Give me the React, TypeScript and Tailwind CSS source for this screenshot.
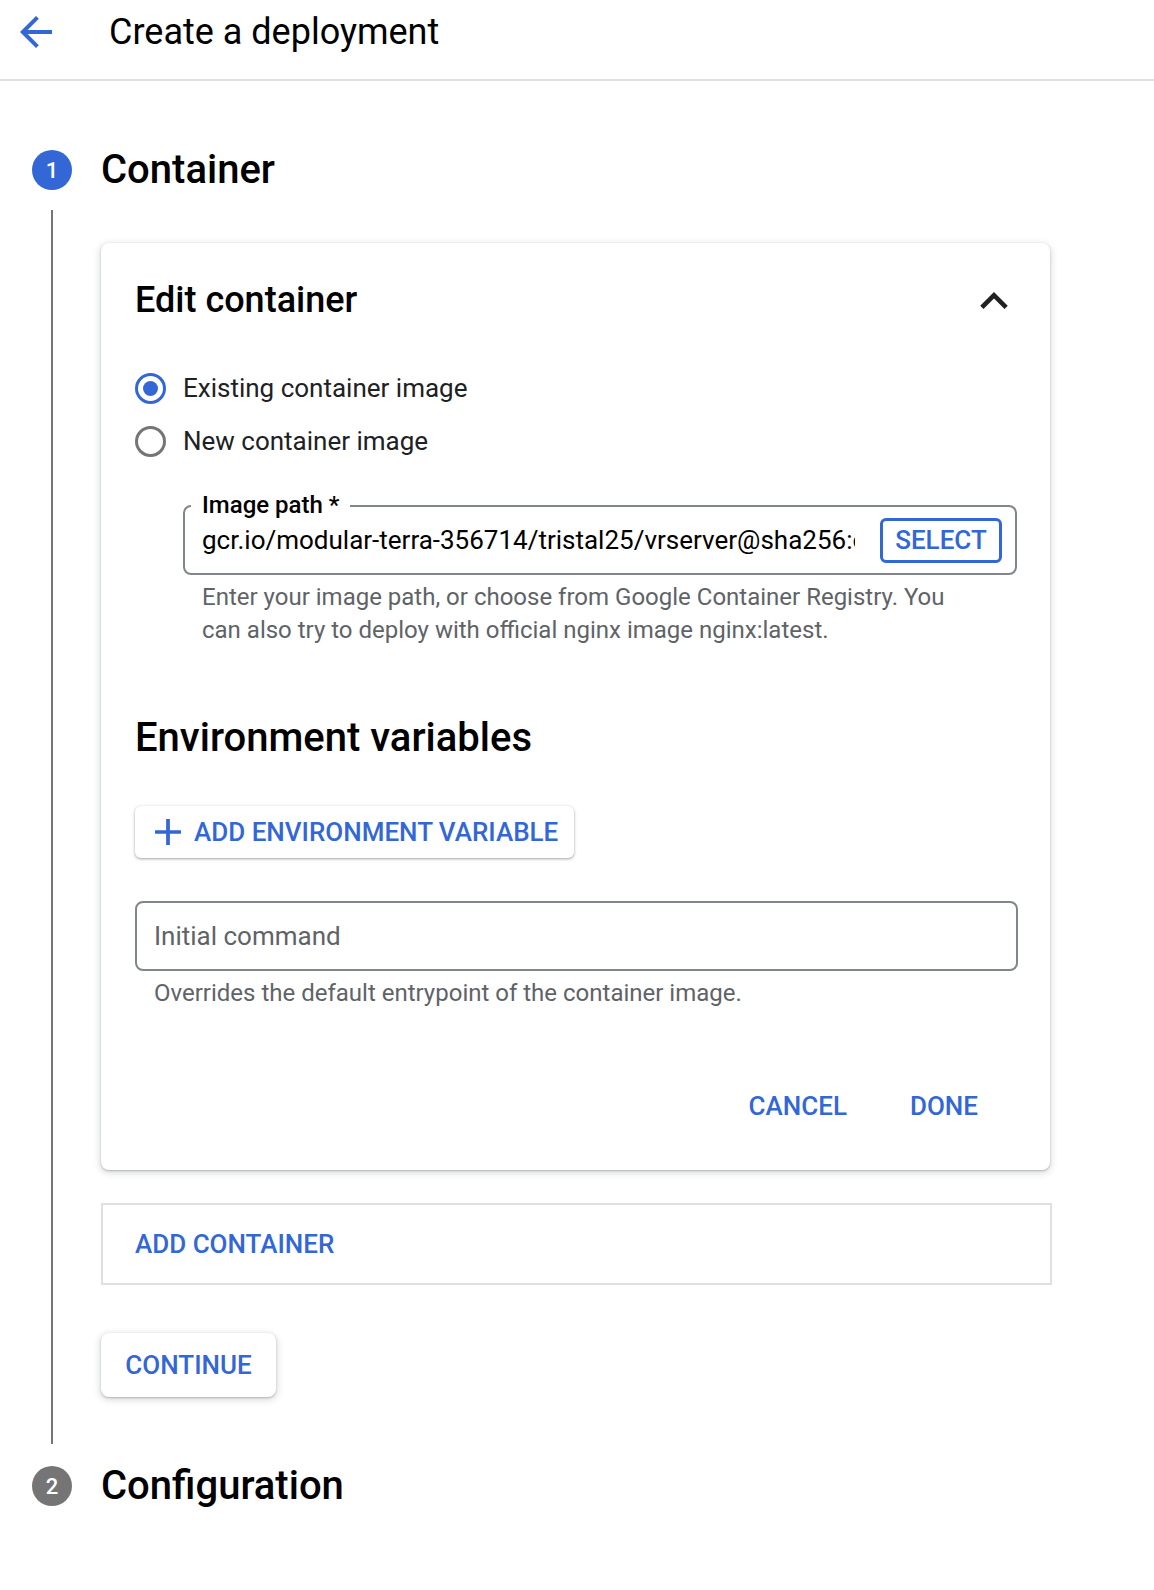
import React from 'react'

const blue = 'text-[#3367d6]'

function Radio({ checked, label }: { checked: boolean; label: string }) {
  return (
    <div className="flex h-[40px] items-center">
      <div
        className={`flex h-[31px] w-[31px] items-center justify-center rounded-full border-[3px] ${
          checked ? 'border-[#3367d6]' : 'border-[#757575]'
        }`}
      >
        {checked && <div className="h-[15px] w-[15px] rounded-full bg-[#3367d6]" />}
      </div>
      <span className="ml-[17px] text-[26px] leading-[30px] text-[#202124]">{label}</span>
    </div>
  )
}

function StepCircle({ n, active }: { n: number; active: boolean }) {
  return (
    <div
      className={`flex h-10 w-10 shrink-0 items-center justify-center rounded-full text-[22px] font-medium text-white ${
        active ? 'bg-[#3367d6]' : 'bg-[#757575]'
      }`}
    >
      {n}
    </div>
  )
}

export default function App() {
  return (
    <div className="min-h-[1590px] w-[1154px] bg-white font-['Roboto',sans-serif] text-[#202124]">
      {/* top bar */}
      <div className="h-[81px] border-b-2 border-[#e0e0e0]">
        <div className="flex h-[64px] items-center">
          <svg className="ml-[20px]" width="32" height="32" viewBox="4 4 16 16" fill="#3367d6">
            <path d="M20 11H7.83l5.59-5.59L12 4l-8 8 8 8 1.41-1.41L7.83 13H20v-2z" />
          </svg>
          <h1 className="ml-[57px] text-[36px] font-normal text-black">Create a deployment</h1>
        </div>
      </div>

      <div className="mt-[69px] pl-[32px]">
        {/* step 1 */}
        <div className="flex items-center">
          <StepCircle n={1} active />
          <h2 className="ml-[29px] text-[40px] leading-[40px] font-medium text-black">Container</h2>
        </div>

        <div className="flex">
          <div className="flex w-10 shrink-0 justify-center pt-[20px]">
            <div className="w-[2px] bg-[#757575]" />
          </div>

          <div className="ml-[29px] pt-[53px] pb-[47px]">
            {/* edit container card */}
            <div className="w-[949px] rounded-[8px] bg-white px-[34px] pt-[37px] pb-[44px] shadow-[0_1px_2px_rgba(60,64,67,0.3),0_2px_6px_2px_rgba(60,64,67,0.15)]">
              <div className="flex h-[40px] items-center justify-between">
                <h3 className="text-[36px] leading-[40px] font-medium text-black">Edit container</h3>
                <svg className="mr-[8px]" width="28" height="17" viewBox="6 8 12 7.41" fill="#202124">
                  <path d="M12 8l-6 6 1.41 1.41L12 10.83l4.59 4.58L18 14z" />
                </svg>
              </div>

              <div className="mt-[48px] flex flex-col gap-[13px]">
                <Radio checked label="Existing container image" />
                <Radio checked={false} label="New container image" />
              </div>

              <div className="ml-[48px] mt-[44px]">
                <div className="relative flex h-[70px] w-[834px] items-center rounded-[8px] border-2 border-[#80868b] pl-[17px] pr-[13px]">
                  <span className="absolute -top-[16px] left-[6px] bg-white px-[11px] text-[24px] leading-[28px] font-medium text-black">
                    Image path *
                  </span>
                  <div className="w-[653px] overflow-hidden whitespace-nowrap text-[26px] leading-[32px] text-black">
                    gcr.io/modular-terra-356714/tristal25/vrserver@sha256:c0a1b2d3e4f5
                  </div>
                  <button className="ml-auto flex h-[45px] w-[122px] items-center justify-center rounded-[6px] border-[3px] border-[#3367d6] text-[26px] font-medium text-[#3367d6]">
                    SELECT
                  </button>
                </div>
                <p className="mt-[6px] w-[780px] pl-[19px] text-[24px] leading-[33px] text-[#5f6368]">
                  Enter your image path, or choose from Google Container Registry. You can also try to deploy with official nginx image nginx:latest.
                </p>
              </div>

              <h3 className="mt-[68px] text-[40px] leading-[46px] font-medium text-black">Environment variables</h3>

              <button className="mt-[45px] flex h-[52px] items-center rounded-[6px] bg-white pl-[20px] pr-[16px] shadow-[0_1px_2px_rgba(60,64,67,0.3),0_1px_3px_1px_rgba(60,64,67,0.15)]">
                <svg width="26" height="26" viewBox="5 5 14 14" fill="#3367d6">
                  <path d="M19 13h-6v6h-2v-6H5v-2h6V5h2v6h6v2z" />
                </svg>
                <span className={`ml-[13px] text-[26px] font-medium ${blue}`}>ADD ENVIRONMENT VARIABLE</span>
              </button>

              <div className="mt-[43px] flex h-[70px] w-[883px] items-center rounded-[8px] border-2 border-[#80868b] pl-[17px]">
                <span className="text-[26px] text-[#5f6368]">Initial command</span>
              </div>
              <p className="mt-[6px] pl-[19px] text-[24px] leading-[33px] text-[#5f6368]">
                Overrides the default entrypoint of the container image.
              </p>

              <div className="mt-[76px] flex h-[40px] items-center justify-end gap-[63px] pr-[38px]">
                <button className={`text-[26px] font-medium ${blue}`}>CANCEL</button>
                <button className={`text-[26px] font-medium ${blue}`}>DONE</button>
              </div>
            </div>

            {/* add container */}
            <div className="mt-[33px] flex h-[82px] w-[951px] items-center border-2 border-[#e0e0e0] pl-[32px]">
              <span className={`text-[26px] font-medium ${blue}`}>ADD CONTAINER</span>
            </div>

            <button className="mt-[48px] flex h-[64px] w-[175px] items-center justify-center rounded-[8px] bg-white shadow-[0_1px_2px_rgba(60,64,67,0.3),0_2px_6px_2px_rgba(60,64,67,0.15)]">
              <span className={`text-[26px] font-medium ${blue}`}>CONTINUE</span>
            </button>
          </div>
        </div>

        {/* step 2 */}
        <div className="mt-[22px] flex items-center">
          <StepCircle n={2} active={false} />
          <h2 className="ml-[29px] text-[40px] leading-[40px] font-medium text-black">Configuration</h2>
        </div>
      </div>
    </div>
  )
}
